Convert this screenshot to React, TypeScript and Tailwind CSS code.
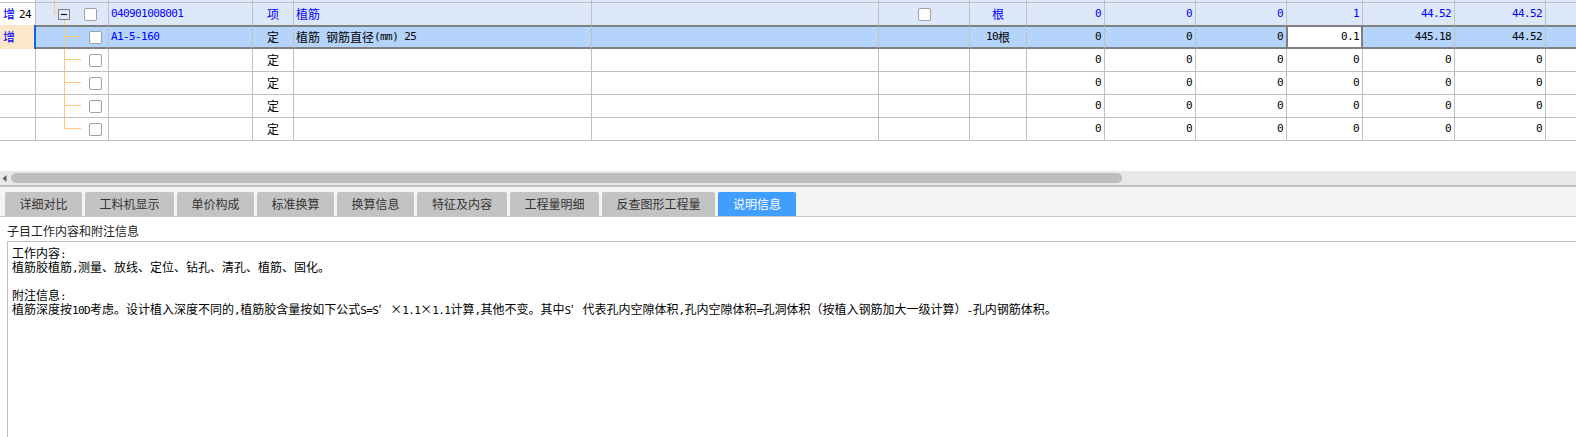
import React from "react";

const GRID =
  "grid grid-cols-[36px_73px_144px_41px_298px_287px_91px_57px_78px_91px_91px_76px_92px_91px_1fr]";
const CJK = "[font-family:'Noto_Sans_CJK_SC','Noto_Sans',sans-serif]";
const MONO =
  "[font-family:'DejaVu_Sans_Mono',monospace] text-[11px] tracking-[-0.6px] whitespace-pre";

function M({ t }: { t: string }) {
  const parts = t.split(/([\x20-\x7e]+|′|×)/).filter((p) => p.length > 0);
  return (
    <>
      {parts.map((p, i) => {
        if (p === "′")
          return (
            <span key={i} className="inline-block w-[12px] text-left">
              ′
            </span>
          );
        if (p === "×")
          return (
            <span key={i} className="inline-block w-[12px] text-center">
              ×
            </span>
          );
        return /^[\x20-\x7e]+$/.test(p) ? (
          <span key={i} className={MONO}>
            {p}
          </span>
        ) : (
          <span key={i}>{p}</span>
        );
      })}
    </>
  );
}

function Box() {
  return (
    <span className="block w-[13px] h-[13px] border border-[#a0a0a0] rounded-[2px] bg-white shrink-0" />
  );
}

const C = "border-r border-[#c0c0c0] h-full min-w-0 overflow-hidden";

function NumCell({ v }: { v: string }) {
  return (
    <div className={`${C} flex items-center justify-end pr-[3px]`}>
      <M t={v} />
    </div>
  );
}

function ChildRow({ last }: { last?: boolean }) {
  return (
    <div className={`${GRID} h-[23px] border-b border-[#c0c0c0] bg-white text-black`}>
      <div className={C} />
      <div className={`${C} relative flex items-center pl-[53px]`}>
        {last ? (
          <span className="absolute left-[28px] top-0 h-[11px] w-px bg-[#ffc878]" />
        ) : (
          <span className="absolute left-[28px] top-0 bottom-0 w-px bg-[#ffc878]" />
        )}
        <span className="absolute left-[28px] top-[10px] w-[17px] h-px bg-[#ffc878]" />
        <Box />
      </div>
      <div className={C} />
      <div className={`${C} flex items-center justify-center`}>定</div>
      <div className={C} />
      <div className={C} />
      <div className={C} />
      <div className={C} />
      {["0", "0", "0", "0", "0", "0"].map((v, i) => (
        <NumCell key={i} v={v} />
      ))}
      <div className="h-full" />
    </div>
  );
}

const tabs = [
  { t: "详细对比", w: "w-[77px]" },
  { t: "工料机显示", w: "w-[89px]" },
  { t: "单价构成", w: "w-[77px]" },
  { t: "标准换算", w: "w-[77px]" },
  { t: "换算信息", w: "w-[77px]" },
  { t: "特征及内容", w: "w-[90px]" },
  { t: "工程量明细", w: "w-[89px]" },
  { t: "反查图形工程量", w: "w-[113px]" },
  { t: "说明信息", w: "w-[78px]", active: true },
];

export default function App() {
  const selB =
    "border-t-2 border-b-2 border-t-[#808080] border-b-[#808080] border-r border-r-[#c0c0c0] h-full min-w-0 overflow-hidden";
  return (
    <div className={`${CJK} text-[12px] w-[1576px] h-[437px] overflow-hidden bg-white`}>
      {/* top strip of previous row */}
      <div className={`${GRID} h-[3px] border-b border-[#c0c0c0] bg-[#dde8fb]`}>
        <div className={`${C} bg-white`} />
        <div className={`${C} relative`}>
          <span className="absolute left-[18px] top-0 bottom-0 w-px bg-[#ffc878]" />
        </div>
        {Array.from({ length: 12 }).map((_, i) => (
          <div key={i} className={C} />
        ))}
        <div />
      </div>

      {/* row 1: item */}
      <div className={`${GRID} h-[22px] bg-[#dde8fb] text-[#0000ff]`}>
        <div className={`${C} bg-white flex items-center pl-[3px] pr-[4px] justify-between`}>
          <span>增</span>
          <span className="text-black">
            <M t="24" />
          </span>
        </div>
        <div className={`${C} relative flex items-center pl-[48px]`}>
          <span className="absolute left-[18px] top-0 h-[11px] w-px bg-[#ffc878]" />
          <span className="absolute left-[18px] top-[10px] w-[4px] h-px bg-[#ffc878]" />
          <span className="absolute left-[28px] top-[17px] bottom-0 w-px bg-[#ffc878]" />
          <span className="absolute left-[22px] top-[6px] w-[12px] h-[11px] border border-[#808080] flex items-center justify-center">
            <span className="block w-[6px] h-px bg-black" />
          </span>
          <Box />
        </div>
        <div className={`${C} flex items-center pl-[2px]`}>
          <M t="040901008001" />
        </div>
        <div className={`${C} flex items-center justify-center`}>项</div>
        <div className={`${C} flex items-center pl-[2px]`}>植筋</div>
        <div className={C} />
        <div className={`${C} flex items-center justify-center`}>
          <Box />
        </div>
        <div className={`${C} flex items-center justify-center`}>根</div>
        {["0", "0", "0", "1", "44.52", "44.52"].map((v, i) => (
          <NumCell key={i} v={v} />
        ))}
        <div className="h-full" />
      </div>

      {/* row 2: selected */}
      <div className={`${GRID} h-[24px] bg-[#b4d4fc] text-black`}>
        <div className="h-full bg-[#fde7c9] border-r-2 border-[#1463e6] flex items-center pl-[3px] text-[#0000ff]">
          增
        </div>
        <div className={`${selB} relative flex items-center pl-[53px]`}>
          <span className="absolute left-[28px] top-0 bottom-0 w-px bg-[#ffc878]" />
          <span className="absolute left-[28px] top-[9px] w-[17px] h-px bg-[#ffc878]" />
          <Box />
        </div>
        <div className={`${selB} flex items-center pl-[2px] text-[#0000ff]`}>
          <M t="A1-5-160" />
        </div>
        <div className={`${selB} flex items-center justify-center`}>定</div>
        <div className={`${selB} flex items-center pl-[2px] whitespace-pre`}>
          <M t="植筋 钢筋直径(mm) 25" />
        </div>
        <div className={selB} />
        <div className={selB} />
        <div className={`${selB} flex items-center justify-center`}>
          <M t="10" />
          根
        </div>
        <div className={`${selB} flex items-center justify-end pr-[3px]`}>
          <M t="0" />
        </div>
        <div className={`${selB} flex items-center justify-end pr-[3px]`}>
          <M t="0" />
        </div>
        <div className="border-t-2 border-b-2 border-t-[#808080] border-b-[#808080] border-r border-r-[#808080] h-full flex items-center justify-end pr-[3px]">
          <M t="0" />
        </div>
        <div className="border-t-2 border-b-2 border-t-[#808080] border-b-[#808080] border-l border-l-[#808080] border-r-2 border-r-[#808080] h-full bg-white flex items-center justify-end pr-[2px]">
          <M t="0.1" />
        </div>
        <div className={`${selB} flex items-center justify-end pr-[3px]`}>
          <M t="445.18" />
        </div>
        <div className={`${selB} flex items-center justify-end pr-[3px]`}>
          <M t="44.52" />
        </div>
        <div className="border-t-2 border-b-2 border-[#808080] h-full" />
      </div>

      <ChildRow />
      <ChildRow />
      <ChildRow />
      <ChildRow last />

      {/* empty space */}
      <div className="h-[30px]" />

      {/* horizontal scrollbar */}
      <div className="h-[14px] bg-[#e8e8e8] flex items-center relative">
        <svg className="absolute left-[2px] top-[4px]" width="5" height="7" viewBox="0 0 5 7">
          <polygon points="4.5,0 4.5,7 0.5,3.5" fill="#606060" />
        </svg>
        <div className="ml-[11px] w-[1111px] h-[10px] rounded-full bg-[#bebebe]" />
      </div>
      <div className="h-[2px] bg-[#c0c0c0]" />

      {/* tab bar */}
      <div className="h-[30px] bg-[#f4f4f4] border-b border-[#c8c8c8] flex items-end pl-[5px] gap-[3px]">
        {tabs.map((tb) => (
          <div
            key={tb.t}
            className={`${tb.w} h-[24px] rounded-t-[2px] flex items-center justify-center text-[12px] ${
              tb.active ? "bg-[#409eff] text-white" : "bg-[#c3c3c3] text-[#333333]"
            }`}
          >
            {tb.t}
          </div>
        ))}
      </div>

      {/* label */}
      <div className="h-[24px] pt-[3px] pl-[7px] flex items-center text-[12px] text-[#222222]">
        子目工作内容和附注信息
      </div>

      {/* text box */}
      <div className="ml-[7px] border-l border-t border-[#c0c0c0] h-[200px] pl-[4px] pt-[4px] text-black">
        <div className="h-[14px] leading-[14px] whitespace-nowrap">
          <M t="工作内容:" />
        </div>
        <div className="h-[14px] leading-[14px] whitespace-nowrap">
          <M t="植筋胶植筋,测量、放线、定位、钻孔、清孔、植筋、固化。" />
        </div>
        <div className="h-[14px]" />
        <div className="h-[14px] leading-[14px] whitespace-nowrap">
          <M t="附注信息:" />
        </div>
        <div className="h-[14px] leading-[14px] whitespace-nowrap">
          <M t="植筋深度按10D考虑。设计植入深度不同的,植筋胶含量按如下公式S=S′×1.1×1.1计算,其他不变。其中S′代表孔内空隙体积,孔内空隙体积=孔洞体积（按植入钢筋加大一级计算）-孔内钢筋体积。" />
        </div>
      </div>
    </div>
  );
}
